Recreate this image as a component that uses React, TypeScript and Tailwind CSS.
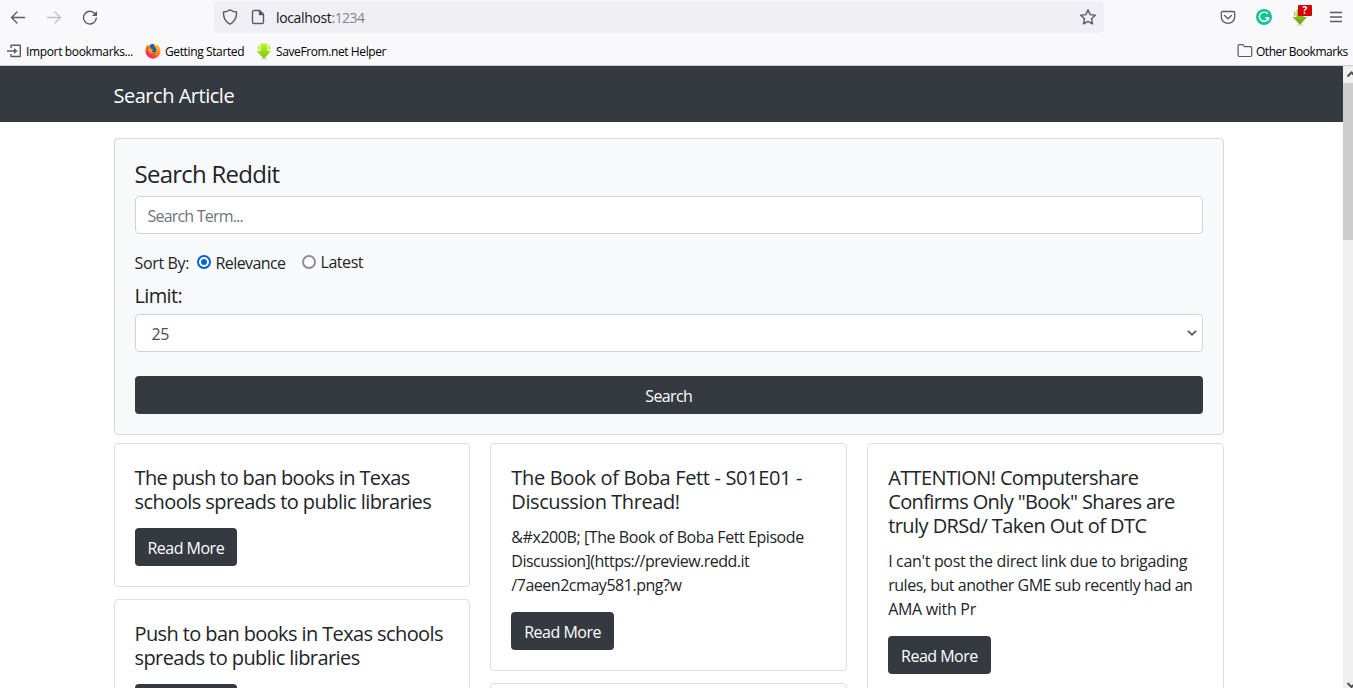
import React from "react";

type Line = { text: string; track: string };
type Article = { title: Line[]; body?: Line[] };

const columns: Article[][] = [
  [
    {
      title: [
        { text: "The push to ban books in Texas", track: "tracking-[-0.62px]" },
        { text: "schools spreads to public libraries", track: "tracking-[-0.55px]" },
      ],
    },
    {
      title: [
        { text: "Push to ban books in Texas schools", track: "tracking-[-0.61px]" },
        { text: "spreads to public libraries", track: "tracking-[-0.58px]" },
      ],
    },
  ],
  [
    {
      title: [
        { text: "The Book of Boba Fett - S01E01 -", track: "tracking-[-0.35px]" },
        { text: "Discussion Thread!", track: "tracking-[-0.42px]" },
      ],
      body: [
        { text: "&#x200B; [The Book of Boba Fett Episode", track: "tracking-[-0.43px]" },
        { text: "Discussion](https://preview.redd.it", track: "tracking-[-0.52px]" },
        { text: "/7aeen2cmay581.png?w", track: "tracking-[-0.47px]" },
      ],
    },
    { title: [] },
  ],
  [
    {
      title: [
        { text: "ATTENTION! Computershare", track: "tracking-[-0.62px]" },
        { text: 'Confirms Only "Book" Shares are', track: "tracking-[-0.62px]" },
        { text: "truly DRSd/ Taken Out of DTC", track: "tracking-[-0.56px]" },
      ],
      body: [
        { text: "I can't post the direct link due to brigading", track: "tracking-[-0.33px]" },
        { text: "rules, but another GME sub recently had an", track: "tracking-[-0.47px]" },
        { text: "AMA with Pr", track: "tracking-[-0.3px]" },
      ],
    },
  ],
];

function Lines({ lines }: { lines: Line[] }) {
  return (
    <>
      {lines.map((l, i) => (
        <span key={i} className={`block h-6 whitespace-nowrap ${l.track}`}>
          {l.text}
        </span>
      ))}
    </>
  );
}

function ArticleCard({ title, body }: Article) {
  return (
    <article className="shrink-0 rounded border border-[#dfdfdf] bg-white p-5">
      <h5 className="-mb-[2px] pt-[2px] text-[20px] leading-6">
        <Lines lines={title} />
      </h5>
      {body && (
        <p className="-mb-px mt-3 pt-px text-base leading-6">
          <Lines lines={body} />
        </p>
      )}
      {title.length > 0 && (
        <button className="mt-4 block h-[38px] w-[102.5px] rounded bg-[#343a40] pt-[2px] text-base tracking-[-0.5px] text-white">
          Read More
        </button>
      )}
    </article>
  );
}

function GreenArrow({ className, dark }: { className?: string; dark?: boolean }) {
  return (
    <svg viewBox="0 0 16 17" className={className} width="16" height="17">
      <defs>
        <linearGradient id="arrow-light" x1="0" y1="0" x2="0" y2="17" gradientUnits="userSpaceOnUse">
          <stop offset="0" stopColor="#c2f52e" />
          <stop offset="0.5" stopColor="#98e00f" />
          <stop offset="1" stopColor="#74b80c" />
        </linearGradient>
        <linearGradient id="arrow-dark" x1="0" y1="0" x2="0" y2="17" gradientUnits="userSpaceOnUse">
          <stop offset="0" stopColor="#a5d43a" />
          <stop offset="1" stopColor="#609d0c" />
        </linearGradient>
      </defs>
      <ellipse cx="8" cy="16" rx="4" ry="0.700" fill="#d5d8d0" />
      <path d="M4.500 .5h7v7.500H15L8 15.800.5 8h4z" fill={dark ? "url(#arrow-dark)" : "url(#arrow-light)"} />
      <path d="M2 2.500h1.300v4.200H2zM12.700 2.500H14v4.200h-1.300z" fill={dark ? "#9ccb35" : "#a9e62a"} />
    </svg>
  );
}

function FirefoxLogo() {
  return (
    <svg viewBox="0 0 16 16" width="16" height="16">
      <defs>
        <linearGradient id="fox" x1="1" y1="0" x2="0.2" y2="1">
          <stop offset="0" stopColor="#ffe226" />
          <stop offset="0.450" stopColor="#ff8a16" />
          <stop offset="0.800" stopColor="#ff3647" />
          <stop offset="1" stopColor="#e31587" />
        </linearGradient>
      </defs>
      <path
        d="M1.600 3.200 2.300 1.500 3.800 3 6 2.200 9 .5c1 1.500 1.500 1.500 2.500 2l.8-1c1.700 1.500 3.200 3.700 3.200 6.500a7.500 7.500 0 0 1-15 .3C.4 6.300.8 4.600 1.600 3.200z"
        fill="url(#fox)"
      />
      <path d="M4.500 2.200C6 .8 8 .8 9 1.200c-.4 1 .2 1.800 1 2.800 1.600 1.700 1.500 4.200.3 5.600-1.200 1.300-3.400 1.500-4.800.4C4.300 9.200 4 8 4.300 6.800l2.200.9 1.300-1.200-2-1z" fill="#1b5fb4" />
      <path d="M3.200 6 6 5.400l2 1.300-1.300 1.300c.3 1 1.700 1.500 3 .8-1 1.900-3.700 2.300-5.300.6z" fill="#ff980e" />
    </svg>
  );
}

function BrowserChrome() {
  return (
    <header className="h-[66px] shrink-0 border-b border-[#cccccc] bg-[#f9f9fb] text-[#15141a]">
      <div className="flex h-[34px] items-center">
        <svg className="ml-[10px]" width="16" height="16" viewBox="0 0 16 16" fill="none" stroke="#5b5b66" strokeWidth="1.400" strokeLinecap="round" strokeLinejoin="round">
          <path d="M14.500 8.500H1.500M7 3 1.500 8.500 7 14" />
        </svg>
        <svg className="ml-5" width="16" height="16" viewBox="0 0 16 16" fill="none" stroke="#bfbfc5" strokeWidth="1.400" strokeLinecap="round" strokeLinejoin="round">
          <path d="M1.500 8.500h13M9 3l5.500 5.500L9 14" />
        </svg>
        <svg className="ml-5" width="16" height="16" viewBox="0 0 16 16" fill="none" stroke="#5b5b66" strokeWidth="1.400" strokeLinecap="round">
          <path d="M12.800 4.500A6.400 6.400 0 1 0 14.300 9" />
          <path d="M15 2v5h-5z" fill="#5b5b66" stroke="none" />
        </svg>
        <div className="ml-[116px] flex h-8 w-[890px] items-center rounded bg-[#f0f0f4] pl-2">
          <svg width="16" height="16" viewBox="0 0 16 16" fill="none" stroke="#5b5b66" strokeWidth="1.400" strokeLinejoin="round">
            <path d="M8 .8c2 1.500 4 2.100 6.500 2.200.3 5.500-1.500 9.500-6.500 12.200C3 12.500 1.200 8.500 1.500 3 4 2.900 6 2.300 8 .8z" />
          </svg>
          <svg className="ml-3" width="16" height="16" viewBox="0 0 16 16" fill="none" stroke="#5b5b66" strokeWidth="1.400" strokeLinejoin="round">
            <path d="M3.800 1.500h5.700l4 4v7.700c0 .7-.6 1.300-1.300 1.300H3.800c-.7 0-1.300-.6-1.300-1.300V2.800c0-.7.600-1.300 1.300-1.300z" />
            <path d="M9.500 1.500v4h4z" fill="#5b5b66" />
          </svg>
          <span className="ml-[10px] pt-px text-[14px] tracking-[-0.35px]">
            localhost<span className="tracking-[-0.55px] text-[#85858c]">:1234</span>
          </span>
          <svg className="ml-auto mr-2" width="16" height="16" viewBox="0 0 16 16" fill="none" stroke="#5b5b66" strokeWidth="1.400" strokeLinejoin="round">
            <path d="m8 .9 2.100 4.700 5.200.6-3.800 3.500 1 5.200L8 12.400l-4.500 2.500 1-5.200L.7 6.200l5.200-.6z" />
          </svg>
        </div>
        <svg className="ml-[116px]" width="16" height="16" viewBox="0 0 16 16" fill="none" stroke="#5b5b66" strokeWidth="1.300" strokeLinecap="round" strokeLinejoin="round">
          <path d="M2.500 2.500h11c.7 0 1.200.5 1.200 1.200V8a6.700 6.300 0 0 1-13.400 0V3.700C1.300 3 1.800 2.500 2.500 2.500z" />
          <path d="M4.500 6.500 8 9.800 11.500 6.500" />
        </svg>
        <svg className="ml-5" width="16" height="16" viewBox="0 0 16 16" fill="none">
          <circle cx="8" cy="8" r="8" fill="#15c39a" />
          <path d="M11.600 4.800A4.600 4.600 0 1 0 12.500 8.700H9M12.500 8.700v2.800" stroke="white" strokeWidth="1.400" />
        </svg>
        <div className="relative ml-5 h-[17px] w-4">
          <GreenArrow dark />
          <span className="absolute -top-[4px] left-[6px] flex h-[11px] w-[14px] items-center justify-center rounded-[1px] bg-[#d90000] text-[10px] font-bold leading-none text-white">
            ?
          </span>
        </div>
        <svg className="ml-5" width="16" height="16" viewBox="0 0 16 16" stroke="#5b5b66" strokeWidth="1.300">
          <path d="M2 3.500h12M2 8h12M2 12.500h12" />
        </svg>
      </div>
      <div className="flex h-[31px] items-center pl-[6px] pr-[5px] pt-[3px] text-[12px] text-black">
        <svg width="16" height="16" viewBox="0 0 16 16" fill="none" stroke="#5b5b66" strokeWidth="1.400" strokeLinejoin="round">
          <path d="M5 5V2.200h9.300v11.300H5V11M1 8h8" />
          <path d="M8 5v6l3.500-3z" fill="#5b5b66" stroke="none" />
        </svg>
        <span className="ml-1 w-[107px] whitespace-nowrap pt-px tracking-[-0.35px]">Import bookmarks...</span>
        <span className="ml-3 flex">
          <FirefoxLogo />
        </span>
        <span className="ml-1 w-[79px] whitespace-nowrap pt-px tracking-[-0.38px]">Getting Started</span>
        <GreenArrow className="ml-3" />
        <span className="ml-1 whitespace-nowrap pt-px tracking-[-0.4px]">SaveFrom.net Helper</span>
        <svg className="ml-auto" width="16" height="16" viewBox="0 0 16 16" fill="none" stroke="#5b5b66" strokeWidth="1.200" strokeLinejoin="round">
          <path d="M2.300 1.600h3.500L7.500 3.600h6c.7 0 1.200.5 1.200 1.200v7.500c0 .7-.5 1.200-1.200 1.200H2.300c-.7 0-1.200-.5-1.200-1.200V2.800c0-.7.500-1.200 1.200-1.200z" />
        </svg>
        <span className="ml-[3px] w-[92px] whitespace-nowrap pt-px tracking-[-0.48px]">Other Bookmarks</span>
      </div>
    </header>
  );
}

function SearchPanel() {
  return (
    <form className="flex h-[297px] shrink-0 flex-col rounded border border-[#d5d7d9] bg-[#f8f9fa] px-5 pt-5" onSubmit={(e) => e.preventDefault()}>
      <h4 className="h-[37px] text-[24px] leading-[29px] tracking-[-0.75px]">Search Reddit</h4>
      <input
        className="h-[38px] w-full rounded border border-[#ced4da] bg-white px-3 pt-px text-base tracking-[-0.8px] placeholder:text-[#6c757d]"
        placeholder="Search Term..."
      />
      <div className="mt-4 flex h-[34px] tracking-[-0.35px]">
        <span className="w-[62px] leading-[27px]">Sort By:</span>
        <span className="mt-[5px] flex h-[14px] w-[14px] items-center justify-center rounded-full border-2 border-[#0061e0] bg-white">
          <span className="h-[6px] w-[6px] rounded-full bg-[#0061e0]" />
        </span>
        <span className="ml-[5px] w-[86px] leading-[27px] tracking-[-0.58px]">Relevance</span>
        <span className="mt-[5px] h-[14px] w-[14px] rounded-full border-2 border-[#8f8f9d] bg-white" />
        <span className="ml-[5px] leading-[25px] tracking-[-0.45px]">Latest</span>
      </div>
      <h5 className="h-[30px] text-[20px] leading-[23px] tracking-[-0.65px]">Limit:</h5>
      <div className="flex h-[38px] shrink-0 items-center justify-between rounded border border-[#ced4da] bg-white pl-4 pr-[5px] text-[#495057]">
        <span className="pt-[2px] tracking-[-0.4px]">25</span>
        <svg width="10" height="6" viewBox="0 0 10 6" fill="none" stroke="#5b6066" strokeWidth="1.800">
          <path d="M.8.8 5 4.700 9.200.8" />
        </svg>
      </div>
      <button className="mt-6 h-[38px] shrink-0 rounded bg-[#343a40] pt-[2px] text-base tracking-[-0.6px] text-white">Search</button>
    </form>
  );
}

function Scrollbar() {
  return (
    <div className="flex w-[10px] shrink-0 flex-col overflow-hidden bg-[#f0f0f0]">
      <svg className="shrink-0" width="10" height="17" viewBox="0 0 10 17" fill="none" stroke="#505050" strokeWidth="2">
        <path d="m4.500 10.500 4-4 4 4" />
      </svg>
      <div className="h-[157px] bg-[#cdcdcd]" />
      <svg className="mt-auto shrink-0" width="10" height="17" viewBox="0 0 10 17" fill="none" stroke="#505050" strokeWidth="2">
        <path d="m4.500 12 4 4 4-4" />
      </svg>
    </div>
  );
}

export default function App() {
  return (
    <div className="flex h-[688px] w-[1353px] flex-col overflow-hidden bg-white font-['Open_Sans',sans-serif] text-[#212529]">
      <BrowserChrome />
      <div className="flex min-h-0 flex-1">
        <div className="flex min-w-0 flex-1 flex-col overflow-hidden">
          <nav className="flex h-14 shrink-0 items-center bg-[#343a40] pl-[113.5px] pt-[3px] text-[20px] tracking-[-0.48px] text-white">
            Search Article
          </nav>
          <main className="ml-[113.5px] flex w-[1110.5px] flex-col pt-4">
            <SearchPanel />
            <div className="mt-2 grid grid-cols-3 gap-5">
              {columns.map((cards, c) => (
                <div key={c} className="flex flex-col gap-3">
                  {cards.map((card, i) => (
                    <ArticleCard key={i} {...card} />
                  ))}
                </div>
              ))}
            </div>
          </main>
        </div>
        <Scrollbar />
      </div>
    </div>
  );
}
